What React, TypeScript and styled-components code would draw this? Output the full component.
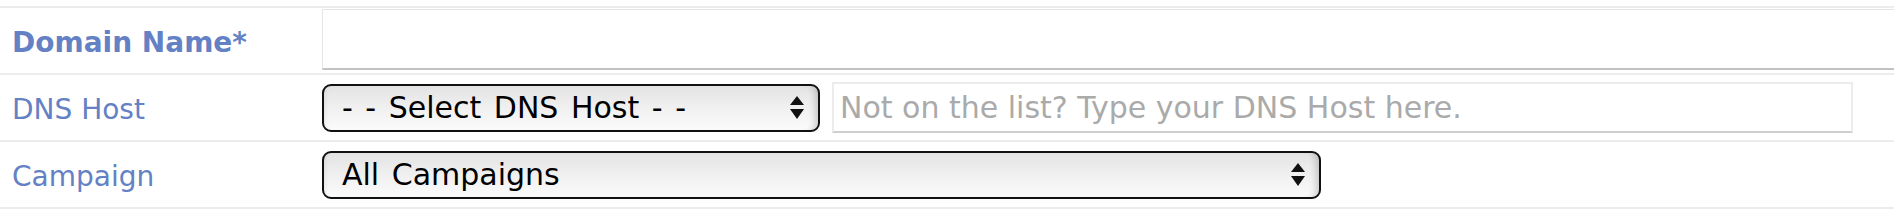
import React from "react";
import styled, { createGlobalStyle } from "styled-components";

const GlobalStyle = createGlobalStyle`
  html, body {
    margin: 0;
    padding: 0;
    background: #ffffff;
    overflow: hidden;
  }
`;

const Form = styled.div`
  padding-top: 6px;
  width: 1894px;
  overflow: hidden;
`;

const Row = styled.div<{ $height: number; $last?: boolean }>`
  display: grid;
  grid-template-columns: 322px 1fr;
  align-items: center;
  height: ${(p) => p.$height}px;
  border-top: 2px solid #ececec;
  border-bottom: ${(p) => (p.$last ? "2px solid #ececec" : "none")};
`;

const Label = styled.div<{ $bold?: boolean }>`
  padding: 4px 0 0 12px;
  font-family: "DejaVu Sans", Verdana, sans-serif;
  font-size: 28px;
  font-weight: ${(p) => (p.$bold ? 700 : 400)};
  color: #6381c4;
  white-space: nowrap;
`;

const Field = styled.div`
  display: flex;
  align-items: center;
  gap: 12px;
  min-width: 0;
`;

const DomainInput = styled.input`
  box-sizing: border-box;
  flex: none;
  width: 1620px;
  height: 61px;
  margin-top: -3px;
  border: 1px solid #e4e4e4;
  border-bottom: 2px solid #c2c2c2;
  background: #ffffff;
  outline: none;
`;

const SelectWrap = styled.div<{ $width: number }>`
  position: relative;
  flex: none;
  width: ${(p) => p.$width}px;
  height: 48px;
`;

const Select = styled.select`
  appearance: none;
  -webkit-appearance: none;
  box-sizing: border-box;
  width: 100%;
  height: 100%;
  padding: 0 40px 0 18px;
  border: 2px solid #111111;
  border-radius: 9px;
  background: linear-gradient(to bottom, #e3e3e3 0%, #efefef 45%, #fbfbfb 100%);
  box-shadow: inset -9px 0 7px -6px rgba(0, 0, 0, 0.18),
    inset 5px 0 5px -5px rgba(0, 0, 0, 0.1);
  font-family: "DejaVu Sans", Verdana, sans-serif;
  font-size: 30px;
  word-spacing: 3px;
  color: #000000;
  outline: none;
`;

const Arrows = styled.svg`
  position: absolute;
  right: 16px;
  top: 50%;
  transform: translateY(-50%);
  pointer-events: none;
`;

const TextInput = styled.input`
  box-sizing: border-box;
  flex: none;
  width: 1021px;
  height: 51px;
  padding: 0 6px;
  border: 2px solid #ececec;
  border-bottom: 2px solid #cfcfcf;
  background: #ffffff;
  font-family: "DejaVu Sans", Verdana, sans-serif;
  font-size: 30px;
  color: #333333;
  outline: none;

  &::placeholder {
    color: #aaaaaa;
  }
`;

const SelectArrows = () => (
  <Arrows width="14" height="24" viewBox="0 0 14 24">
    <polygon points="7,0 14,9 0,9" fill="#111" />
    <polygon points="0,13 14,13 7,23" fill="#111" />
  </Arrows>
);

const App = () => (
  <>
    <GlobalStyle />
    <Form>
      <Row $height={65}>
        <Label $bold>Domain Name*</Label>
        <Field>
          <DomainInput type="text" />
        </Field>
      </Row>
      <Row $height={65}>
        <Label>DNS Host</Label>
        <Field>
          <SelectWrap $width={498}>
            <Select defaultValue="">
              <option value="">- - Select DNS Host - -</option>
            </Select>
            <SelectArrows />
          </SelectWrap>
          <TextInput
            type="text"
            placeholder="Not on the list? Type your DNS Host here."
          />
        </Field>
      </Row>
      <Row $height={65} $last>
        <Label>Campaign</Label>
        <Field>
          <SelectWrap $width={999}>
            <Select defaultValue="all">
              <option value="all">All Campaigns</option>
            </Select>
            <SelectArrows />
          </SelectWrap>
        </Field>
      </Row>
    </Form>
  </>
);

export default App;
